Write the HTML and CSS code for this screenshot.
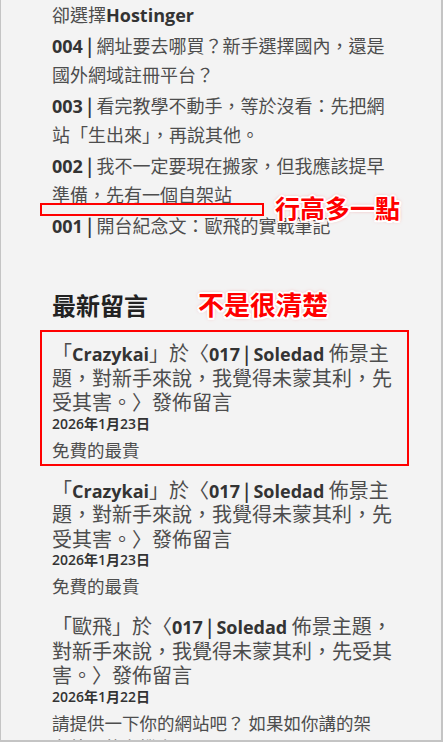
FILE: index.html
```html
<!DOCTYPE html>
<html lang="zh-Hant">
<head>
    <meta charset="UTF-8">
    <title>歐飛的實戰筆記</title>
    <link rel="stylesheet" href="styles.css">
</head>
<body>
<div class="sidebar">
    <ul class="posts">
        <li><a href="#">卻選擇<span class="en">Hostinger</span></a></li>
        <li><a href="#"><span class="en">004</span><span class="sep"> | </span>網址要去哪買？新手選擇國內，還是國外網域註冊平台？</a></li>
        <li><a href="#"><span class="en">003</span><span class="sep"> | </span>看完教學不動手，等於沒看：先把網站「生出來」，再說其他。</a></li>
        <li><a href="#"><span class="en">002</span><span class="sep"> | </span>我不一定要現在搬家，但我應該提早準備，先有一個自架站</a></li>
        <li class="noted">
            <a href="#"><span class="en">001</span><span class="sep"> | </span>開台紀念文：歐飛的實戰筆記</a>
            <span class="mark-box line-mark"></span>
            <span class="mark-text line-note">行高多一點</span>
        </li>
    </ul>

    <h2 class="widget-title">最新留言<span class="mark-text title-note">不是很清楚</span></h2>

    <ul class="comments">
        <li class="comment noted">
            <p class="comment-head">「<a href="#" class="en">Crazykai</a>」於〈<a href="#"><span class="en">017</span><span class="sep"> | </span><span class="en">Soledad</span> 佈景主題，對新手來說，我覺得未蒙其利，先受其害。</a>〉發佈留言</p>
            <div class="comment-date">2026年1月23日</div>
            <div class="comment-excerpt">免費的最貴</div>
            <span class="mark-box comment-mark"></span>
        </li>
        <li class="comment">
            <p class="comment-head">「<a href="#" class="en">Crazykai</a>」於〈<a href="#"><span class="en">017</span><span class="sep"> | </span><span class="en">Soledad</span> 佈景主題，對新手來說，我覺得未蒙其利，先受其害。</a>〉發佈留言</p>
            <div class="comment-date">2026年1月23日</div>
            <div class="comment-excerpt">免費的最貴</div>
        </li>
        <li class="comment">
            <p class="comment-head">「<a href="#">歐飛</a>」於〈<a href="#"><span class="en">017</span><span class="sep"> | </span><span class="en">Soledad</span> 佈景主題，對新手來說，我覺得未蒙其利，先受其害。</a>〉發佈留言</p>
            <div class="comment-date">2026年1月22日</div>
            <div class="comment-excerpt">請提供一下你的網站吧？ 如果如你講的架在外面的主機上…</div>
        </li>
    </ul>
</div>
</body>
</html>
```

FILE: styles.css
```css
*{
    padding: 0;
    margin: 0;
    list-style: none;
    box-sizing: border-box;
}
html, body{
    height: 100%;
    overflow: hidden;
}
body{
    background: #f3f3f3;
    border-left: 1px solid #c4c4c4;
    border-right: 2px solid #c4c4c4;
    border-bottom: 2px solid #c4c4c4;
    padding: 0 47px 0 51px;
    font-family: "Noto Sans CJK TC", "Open Sans", sans-serif;
    color: #4d4d4d;
}
a{
    color: inherit;
    text-decoration: none;
}
.en{
    font-family: "Open Sans", "Noto Sans CJK TC", sans-serif;
    font-size: 18px;
    line-height: 1;
    font-weight: 700;
    color: #333;
}
.sep{
    font-size: 18px;
    line-height: 1;
    font-weight: 700;
    color: #333;
}

/* 文章列表 */
.posts li{
    font-size: 18px;
    line-height: 29px;
    margin-bottom: 2px;
}
.noted{
    position: relative;
}

/* 標題 */
.widget-title{
    margin-top: 49px;
    font-size: 24px;
    line-height: 32px;
    font-weight: 700;
    color: #222;
}

/* 最新留言 */
.comments{
    margin-top: 20px;
}
.comment{
    margin-bottom: 16px;
}
.comment-head{
    font-size: 20px;
    line-height: 24.5px;
}
.comment-date{
    font-family: "Open Sans", "Noto Sans CJK TC", sans-serif;
    font-size: 14px;
    line-height: 17px;
    font-weight: 600;
    color: #333;
}
.comment-excerpt{
    margin-top: 6px;
    padding-right: 12px;
    font-size: 17.5px;
    line-height: 24px;
}

/* 紅色標註 */
.mark-box{
    position: absolute;
    border: 2px solid #f00;
}
.line-mark{
    top: -8px;
    left: -12px;
    width: 224px;
    height: 13px;
}
.comment-mark{
    top: -11px;
    left: -12px;
    right: -15px;
    bottom: -4px;
}
.mark-text{
    font-weight: 700;
    color: #f00;
    text-shadow: 2px 0 #fff, -2px 0 #fff, 0 2px #fff, 0 -2px #fff,
        1.5px 1.5px #fff, -1.5px 1.5px #fff, 1.5px -1.5px #fff, -1.5px -1.5px #fff,
        0 0 4px rgba(255, 0, 0, .6);
}
.line-note{
    position: absolute;
    left: 223px;
    top: -19px;
    font-size: 25px;
    line-height: 30px;
    white-space: nowrap;
}
.title-note{
    margin-left: 50px;
    font-size: 26px;
    line-height: 1;
}
```
